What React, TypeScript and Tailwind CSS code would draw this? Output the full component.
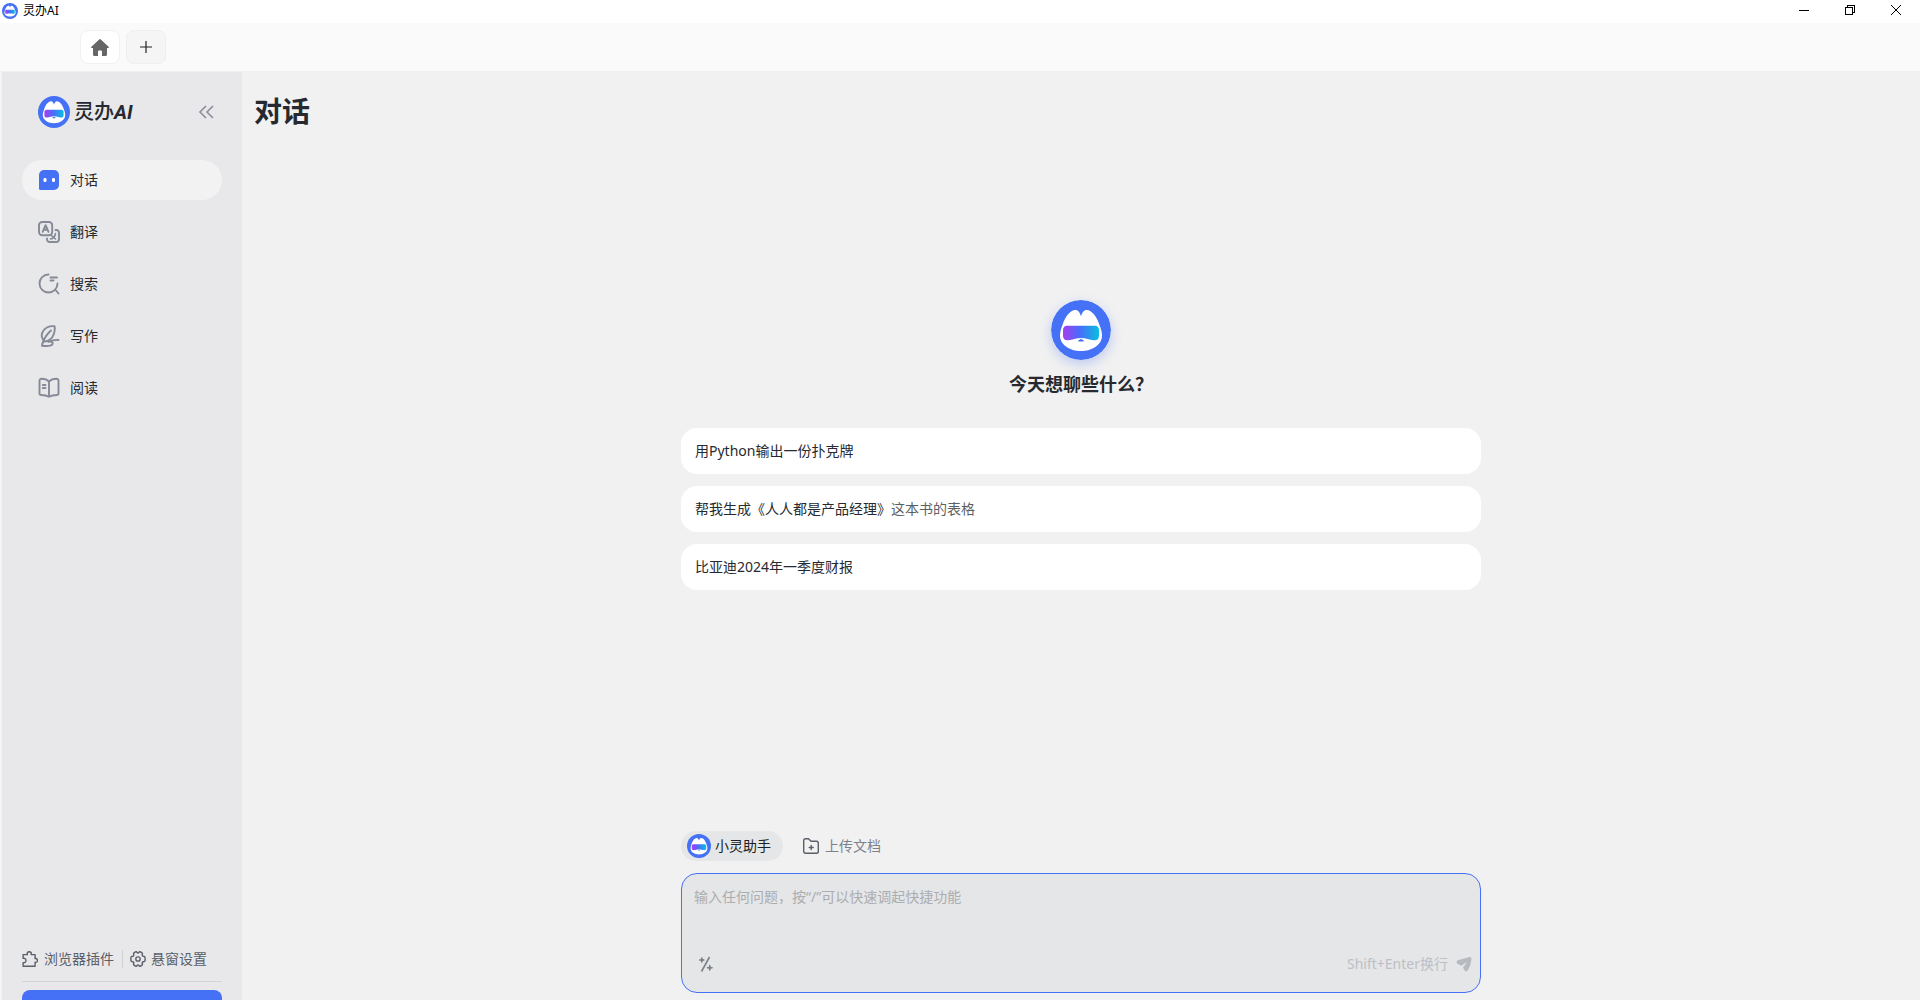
import { useId } from 'react';
import type { ReactNode } from 'react';

interface NavItem {
  id: string;
  label: string;
  icon: ReactNode;
}

function Logo({ className }: { className: string }) {
  const gradientId = useId();

  return (
    <svg viewBox="0 0 60 60" className={className} aria-hidden="true">
      <defs>
        <linearGradient id={gradientId} x1="0" x2="1" y1="0" y2="0">
          <stop offset="0" stopColor="#a83df0" />
          <stop offset="0.45" stopColor="#4a6bfb" />
          <stop offset="1" stopColor="#08bfe0" />
        </linearGradient>
      </defs>
      <circle cx="30" cy="30" r="30" fill="#4571f6" />
      <path
        d="M30 16.5C29 12.5 27 10 24.5 10C19 10 14 17 11.5 25C10 29 9 32 9 35.5C9 45 19 51 30 51C41 51 51 45 51 35.5C51 32 50 29 48.5 25C46 17 41 10 35.5 10C33 10 31 12.5 30 16.5Z"
        fill="#fff"
      />
      <path
        d="M16 25.7H44C46.500 25.700 48 27.500 48 30V35.500C48 39 46 40.500 43 40.300C38 40 35 38 30 38C25 38 22 40 17 40.300C14 40.500 12 39 12 35.500V30C12 27.500 13.500 25.700 16 25.700Z"
        fill={`url(#${gradientId})`}
      />
      <path d="M27.3 40.500L30 38.800L32.700 40.500V41.500H27.300Z" fill="#4571f6" />
    </svg>
  );
}

function ChatIcon() {
  return (
    <svg viewBox="0 0 22 22" className="size-[22px]" aria-hidden="true">
      <path
        d="M6 1H16A5 5 0 0 1 21 6V16A5 5 0 0 1 16 21H2.5A1.5 1.5 0 0 1 1 19.5V6A5 5 0 0 1 6 1Z"
        fill="#4571f6"
      />
      <rect x="5.5" y="9" width="3" height="4" rx="1.2" fill="#fff" />
      <rect x="14" y="9" width="3" height="4" rx="1.2" fill="#fff" />
    </svg>
  );
}

function LineIcon({ children, className = 'size-[22px]' }: { children: ReactNode; className?: string }) {
  return (
    <svg
      viewBox="0 0 22 22"
      className={className}
      fill="none"
      stroke="currentColor"
      strokeWidth="1.9"
      strokeLinecap="round"
      strokeLinejoin="round"
      aria-hidden="true"
    >
      {children}
    </svg>
  );
}

const NAV_ITEMS: NavItem[] = [
  { id: 'chat', label: '对话', icon: <ChatIcon /> },
  {
    id: 'translate',
    label: '翻译',
    icon: (
      <LineIcon>
        <rect x="1" y="1" width="13.2" height="13.2" rx="3.2" />
        <path d="M4.700 10.800L7.600 4.200L10.500 10.800M5.800 8.800H9.400" />
        <path d="M17.500 9H18.300A2.700 2.700 0 0 1 21 11.700V18.300A2.700 2.700 0 0 1 18.300 21H11.700A2.700 2.700 0 0 1 9 18.300V17.500" />
        <path strokeWidth="1.6" d="M12.500 18C15 17.500 17 15.500 17.500 12.500M13.500 14.500L17.500 18" />
      </LineIcon>
    ),
  },
  {
    id: 'search',
    label: '搜索',
    icon: (
      <LineIcon>
        <path d="M10.5 1.5A9 9 0 1 0 19.5 10.500M18 17.500L20.500 20.500M12.500 4.500H19M12.500 7.500H15.500" />
      </LineIcon>
    ),
  },
  {
    id: 'write',
    label: '写作',
    icon: (
      <LineIcon>
        <path d="M7 16.5C3.5 14 2.5 9.500 5.500 5.500C8.500 1.500 13 0.800 16.500 1.200C17.500 6 15.500 12 12 14.500C10 16 8.500 16.500 7 16.500ZM13 5.500C10 8 7 12 5 17" />
        <path d="M20.500 15C17 14.500 13.500 15.500 10.500 16.800C14 16.300 15 17.300 14.500 19C14 21 8 21.300 4 20.800C4 19 4.500 17.500 6 16" />
      </LineIcon>
    ),
  },
  {
    id: 'read',
    label: '阅读',
    icon: (
      <LineIcon>
        <path d="M11 4.500C9 2.500 6 1.800 3.500 1.800C2.200 1.800 1.500 2.500 1.500 3.800V16.500C1.500 17.500 2.200 18 3.200 18C6 18 8.500 18.300 11 19.800C13.500 18.300 16 18 18.800 18C19.800 18 20.500 17.500 20.500 16.500V3.800C20.500 2.500 19.800 1.800 18.500 1.800C16 1.800 13 2.500 11 4.500ZM11 4.500V19.500M4.800 8H7.500M4.800 11H7.500" />
      </LineIcon>
    ),
  },
];

const SUGGESTIONS = [
  { text: '用Python输出一份扑克牌', faded: '' },
  { text: '帮我生成《人人都是产品经理》', faded: '这本书的表格' },
  { text: '比亚迪2024年一季度财报', faded: '' },
];

function TitleBar() {
  return (
    <header className="flex h-[23px] shrink-0 items-center bg-white pb-px pl-0.5 pr-px text-black">
      <Logo className="size-4" />
      <span className="ml-[5px] text-xs">灵办AI</span>
      <div className="ml-auto flex h-5 self-start">
        <button type="button" aria-label="最小化" className="flex w-[46px] items-center justify-center">
          <svg viewBox="0 0 10 10" className="size-2.5" stroke="currentColor" shapeRendering="crispEdges">
            <path d="M0 5.5H10" />
          </svg>
        </button>
        <button type="button" aria-label="还原" className="flex w-[46px] items-center justify-center">
          <svg viewBox="0 0 10 10" className="size-2.5" fill="none" stroke="currentColor" shapeRendering="crispEdges">
            <path d="M0.5 2.5H7.5V9.5H0.5ZM2.5 2.5V0.5H9.5V7.5H7.5" />
          </svg>
        </button>
        <button type="button" aria-label="关闭" className="flex w-[46px] items-center justify-center">
          <svg viewBox="0 0 10 10" className="size-2.5" stroke="currentColor">
            <path d="M0 0L10 10M10 0L0 10" />
          </svg>
        </button>
      </div>
    </header>
  );
}

function TabBar() {
  return (
    <div className="flex h-[49px] shrink-0 items-center gap-1.5 border-b border-[#efefef] bg-[#fafafa] pl-20">
      <button
        type="button"
        aria-label="主页"
        className="flex h-[34px] w-10 items-center justify-center rounded-lg border border-[#f1f1f1] bg-white text-[#666]"
      >
        <svg viewBox="0 0 18 17" className="h-[17px] w-[18px]" fill="currentColor">
          <path d="M8.2 0.4Q9 -0.2 9.8 0.4L17.6 7.8Q18.2 8.8 17 9H16V15.5Q16 17 14.5 17H11V12.5Q11 11.5 10 11.5H8Q7 11.5 7 12.5V17H3.5Q2 17 2 15.5V9H1Q-0.2 8.8 0.4 7.8Z" />
        </svg>
      </button>
      <button
        type="button"
        aria-label="新标签页"
        className="flex h-[34px] w-10 items-center justify-center rounded-lg border border-[#efefef] bg-[#f5f5f5] text-[#222]"
      >
        <svg viewBox="0 0 12 12" className="size-3" stroke="currentColor" strokeWidth="1.2">
          <path d="M6 0V12M0 6H12" />
        </svg>
      </button>
    </div>
  );
}

function Sidebar() {
  return (
    <aside className="flex w-60 shrink-0 flex-col overflow-hidden bg-[#e8e8ea] px-5">
      <div className="flex h-20 shrink-0 items-center pl-4 pr-2">
        <Logo className="size-8" />
        <span className="ml-1 text-xl font-medium text-[#262a30]">
          灵办<em className="font-['Roboto',sans-serif] font-bold">AI</em>
        </span>
        <button type="button" aria-label="收起侧栏" className="ml-auto text-[#8a8f99]">
          <svg viewBox="0 0 16 14" className="h-3.5 w-4" fill="none" stroke="currentColor" strokeWidth="1.6">
            <path d="M8 1L2 7L8 13M15 1L9 7L15 13" />
          </svg>
        </button>
      </div>

      <nav className="flex flex-col gap-3 pt-2">
        {NAV_ITEMS.map((item) => (
          <a
            key={item.id}
            href={`#${item.id}`}
            className={`flex h-10 items-center gap-2.5 rounded-full pl-4 text-sm text-[#262a30] ${
              item.id === 'chat' ? 'bg-[#f2f2f3]' : ''
            }`}
          >
            <span className="text-[#858a96]">{item.icon}</span>
            {item.label}
          </a>
        ))}
      </nav>

      <div className="mt-auto shrink-0">
        <div className="flex items-center pb-3 text-sm text-[#5a5f69]">
          <a href="#extension" className="flex items-center gap-1.5">
            <LineIcon className="size-4">
              <path d="M1.500 5H7.500C6.500 2.500 8 1 10 1C12 1 13.500 2.500 12.500 5H18V10.500C20 10 21.200 11 21.200 13C21.200 15 20 16 18 15.500V21H1.500V16C4 16.500 5.500 15 5.500 13C5.500 11 4 9.500 1.500 10Z" />
            </LineIcon>
            浏览器插件
          </a>
          <span className="ml-2 mr-[7px] h-[18px] w-px bg-[#d0d1d4]" />
          <a href="#settings" className="flex items-center gap-[5px]">
            <LineIcon className="size-4">
              <path d="M7.500 1.200Q9 0.500 9.700 2Q11 3.500 12.300 2Q13 0.500 14.500 1.200L16.500 2.500Q17.500 3.500 16.800 5Q16.500 7 18.500 7.200Q20.500 7.200 20.800 9V13Q20.500 14.800 18.500 14.800Q16.500 15 16.800 17Q17.500 18.500 16.500 19.500L14.500 20.800Q13 21.500 12.300 20Q11 18.500 9.700 20Q9 21.500 7.500 20.800L5.500 19.500Q4.500 18.500 5.200 17Q5.500 15 3.500 14.800Q1.500 14.800 1.200 13V9Q1.500 7.200 3.500 7.200Q5.500 7 5.200 5Q4.500 3.500 5.500 2.500Z" />
              <circle cx="11" cy="11" r="3" />
            </LineIcon>
            悬窗设置
          </a>
        </div>
        <div className="h-[9px] border-t border-[#d3d4d6]" />
        <div className="h-2.5 overflow-hidden">
          <button type="button" aria-label="登录" className="h-10 w-full rounded-lg bg-[#4571f6]" />
        </div>
      </div>
    </aside>
  );
}

function Composer() {
  return (
    <section className="w-full shrink-0 pb-[7px]">
      <div className="flex items-center gap-5 text-sm">
        <button type="button" className="flex h-[30px] items-center gap-1 rounded-full bg-[#e4e6e8] pl-1.5 pr-3 text-[#1c1f23]">
          <Logo className="size-6" />
          小灵助手
        </button>
        <button type="button" className="flex items-center gap-1.5 text-[#7c818c]">
          <svg
            viewBox="0 0 16 16"
            className="size-4 text-[#5a5f69]"
            fill="none"
            stroke="currentColor"
            strokeWidth="1.4"
            strokeLinecap="round"
            strokeLinejoin="round"
          >
            <path d="M0.7 13V2.5Q0.7 0.7 2.5 0.7H5.5L8 3.2H13.5Q15.3 3.2 15.3 5V13.5Q15.3 15.3 13.5 15.3H2.5Q0.7 15.3 0.7 13.5ZM8.2 7.5V11.5M6.2 9.5H10.2" />
          </svg>
          上传文档
        </button>
      </div>

      <div className="mt-3 flex h-[120px] flex-col rounded-2xl border border-[#4571f6] bg-[#e4e6e8]">
        <textarea
          aria-label="输入问题"
          placeholder="输入任何问题，按“/”可以快速调起快捷功能"
          className="w-full flex-1 resize-none bg-transparent px-3 pt-3 text-sm leading-[22px] text-[#262a30] outline-none placeholder:text-[#acadb0]"
        />
        <div className="flex h-10 shrink-0 items-center pb-4 pl-4 pr-2 text-sm text-[#bcbfc5]">
          <button type="button" aria-label="快捷指令" className="text-[#7c818c]">
            <svg viewBox="0 0 16 16" className="size-4" fill="none" stroke="currentColor" strokeWidth="1.6">
              <path d="M11.500 1L3.500 15.500" />
              <path
                stroke="none"
                fill="currentColor"
                d="M3.800 1L4.600 3.200L6.800 4L4.600 4.800L3.800 7L3 4.800L0.800 4L3 3.200ZM11.700 8.500L12.600 10.800L15 11.700L12.600 12.600L11.700 15L10.800 12.600L8.400 11.700L10.800 10.800Z"
              />
              <path strokeWidth="1.400" d="M3.800 1.500V6.500M1.300 4H6.300M11.700 9V14.500M9 11.700H14.500" />
            </svg>
          </button>
          <span className="ml-auto mr-2">Shift+Enter换行</span>
          <button type="button" aria-label="发送" className="text-[#b7babf]">
            <svg viewBox="0 0 16 16" className="size-4" fill="currentColor">
              <path d="M2 4.200L13.200 1Q15.500 0.500 15.500 2.800Q15 9 12 14Q10.500 16.300 8.800 14.700L7 11.500L10.500 7L10 6.500L5.500 9.800L1.300 7.800Q-0.500 5.500 2 4.200Z" />
            </svg>
          </button>
        </div>
      </div>
    </section>
  );
}

export default function App() {
  return (
    <div className="flex h-screen flex-col overflow-hidden bg-[#f1f1f1] font-['Noto_Sans','Noto_Sans_CJK_SC',sans-serif]">
      <TitleBar />
      <TabBar />
      <div className="flex min-h-0 flex-1 border-l-2 border-[#f3f3fa]">
        <Sidebar />
        <main className="flex min-w-0 flex-1 flex-col">
          <h1 className="flex h-[78px] shrink-0 items-center pl-3 text-[28px] font-bold text-[#262a30]">对话</h1>
          <div className="mx-auto flex min-h-0 w-full max-w-[800px] flex-1 flex-col">
            <section className="flex flex-1 flex-col items-center justify-center pb-[91px]">
              <Logo className="size-[60px] rounded-full shadow-[0_4px_12px_rgba(69,113,246,0.3)]" />
              <h2 className="mt-3 text-lg font-bold leading-6 text-[#262a30]">今天想聊些什么？</h2>
              <ul className="mt-8 flex w-full flex-col gap-3">
                {SUGGESTIONS.map((item) => (
                  <li key={item.text}>
                    <button
                      type="button"
                      className="block h-[46px] w-full rounded-2xl bg-white px-3.5 text-left text-sm text-[#262a30]"
                    >
                      {item.text}
                      {item.faded && <span className="text-[#5c5f64]">{item.faded}</span>}
                    </button>
                  </li>
                ))}
              </ul>
            </section>
            <Composer />
          </div>
        </main>
      </div>
    </div>
  );
}
